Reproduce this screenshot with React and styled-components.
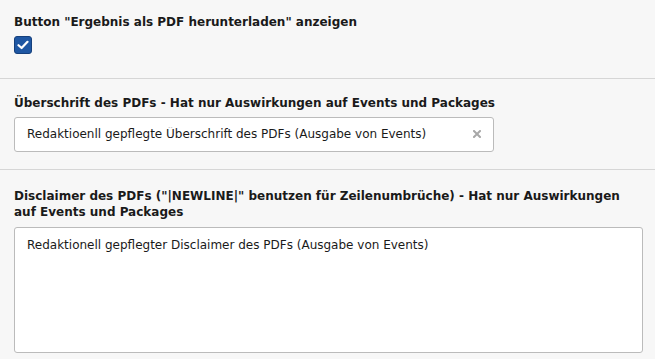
import React from 'react';
import styled, { createGlobalStyle } from 'styled-components';

const GlobalStyle = createGlobalStyle`
    html, body {
        margin: 0;
        padding: 0;
        background: #f7f7f7;
    }
    body {
        font-family: "DejaVu Sans", Verdana, sans-serif;
        font-size: 12px;
        color: #1a1a1a;
    }
`;

const App = () => {
    return (
        <>
            <GlobalStyle />
            <Form>
                <Section $top="14px" $bottom="16px">
                    <Label>Button "Ergebnis als PDF herunterladen" anzeigen</Label>
                    <CheckRow>
                        <Checkbox>
                            <svg width="12" height="10" viewBox="0 0 12 10">
                                <path d="M1.5 5.2 L4.6 8 L10.5 1.8" fill="none" stroke="#fff" strokeWidth="2.2" strokeLinecap="round" strokeLinejoin="round" />
                            </svg>
                        </Checkbox>
                    </CheckRow>
                </Section>
                <Section $top="16px" $bottom="17px">
                    <Label>Überschrift des PDFs - Hat nur Auswirkungen auf Events und Packages</Label>
                    <InputWrap>
                        <TextInput defaultValue="Redaktioenll gepflegte Überschrift des PDFs (Ausgabe von Events)" />
                        <ClearButton aria-label="clear">
                            <svg width="8" height="8" viewBox="0 0 8 8">
                                <path d="M1 1 L7 7 M7 1 L1 7" stroke="#a8a8a8" strokeWidth="2" strokeLinecap="square" />
                            </svg>
                        </ClearButton>
                    </InputWrap>
                </Section>
                <Section $top="18px" $bottom="8px" $last>
                    <Label $gap="6px">Disclaimer des PDFs ("|NEWLINE|" benutzen für Zeilenumbrüche) - Hat nur Auswirkungen auf Events und Packages</Label>
                    <TextArea defaultValue="Redaktionell gepflegter Disclaimer des PDFs (Ausgabe von Events)" />
                </Section>
            </Form>
        </>
    );
};

export default App;

const Form = styled.div`
    display: flex;
    flex-direction: column;
`;

const Section = styled.div`
    padding: ${props => props.$top} 12px ${props => props.$bottom} 14px;
    border-bottom: ${props => props.$last ? 'none' : '1px solid #d6d6d6'};
`;

const Label = styled.div`
    font-weight: bold;
    font-size: 12px;
    line-height: 1.4;
    color: #1a1a1a;
    margin-bottom: ${props => props.$gap || '5px'};
`;

const CheckRow = styled.div`
    display: flex;
    padding-bottom: 8px;
`;

const Checkbox = styled.span`
    width: 18px;
    height: 18px;
    box-sizing: border-box;
    border-radius: 3px;
    background: #1f57a3;
    border: 1px solid #16407c;
    display: flex;
    align-items: center;
    justify-content: center;
`;

const InputWrap = styled.div`
    position: relative;
    width: 480px;
`;

const TextInput = styled.input`
    width: 100%;
    height: 35px;
    box-sizing: border-box;
    border: 1px solid #bbbbbb;
    border-radius: 3px;
    background: #fff;
    padding: 0 30px 0 12px;
    font-family: "DejaVu Sans", Verdana, sans-serif;
    font-size: 12px;
    color: #1a1a1a;
    outline: none;
`;

const ClearButton = styled.span`
    position: absolute;
    right: 13px;
    top: 50%;
    transform: translateY(-50%);
    display: flex;
`;

const TextArea = styled.textarea`
    display: block;
    width: 100%;
    height: 126px;
    box-sizing: border-box;
    border: 1px solid #bbbbbb;
    border-radius: 3px;
    background: #fff;
    padding: 9px 12px;
    font-family: "DejaVu Sans", Verdana, sans-serif;
    font-size: 12px;
    line-height: 1.4;
    color: #1a1a1a;
    resize: none;
    outline: none;
`;
